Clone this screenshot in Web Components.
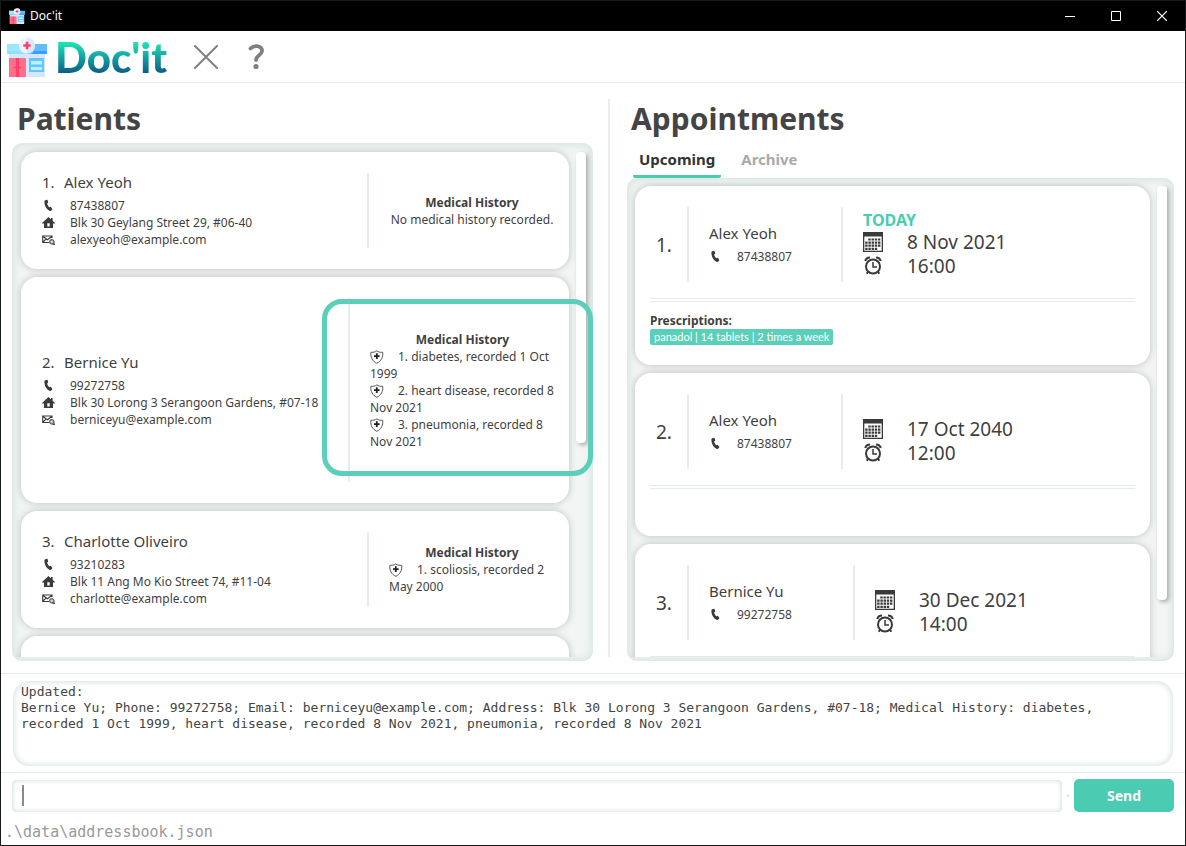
<!DOCTYPE html>
<html lang="en">
<head>
<meta charset="utf-8">
<title>Doc'it</title>
<style>
html, body { margin: 0; height: 100%; }
body { font-family: "Noto Sans", "Open Sans", sans-serif; font-size: 12px; line-height: 17px; color: #3f3f3f; background: #fff;
  --teal: #4acbb2; --line: #e4ecea; --ink: #3a3a3a; --edge: #d6e4e0; }
</style>
</head>
<body>
<docit-window>
  <title-bar slot="title"></title-bar>
  <menu-strip slot="menu"></menu-strip>
  <list-pane slot="left" heading="Patients" thumb="291">
    <patient-card index="1" name="Alex Yeoh" phone="87438807" address="Blk 30 Geylang Street 29, #06-40" email="alexyeoh@example.com">No medical history recorded.</patient-card>
    <patient-card wide index="2" name="Bernice Yu" phone="99272758" address="Blk 30 Lorong 3 Serangoon Gardens, #07-18" email="berniceyu@example.com">
      <history-entry>1. diabetes, recorded 1 Oct 1999</history-entry>
      <history-entry>2. heart disease, recorded 8 Nov 2021</history-entry>
      <history-entry>3. pneumonia, recorded 8 Nov 2021</history-entry>
    </patient-card>
    <patient-card index="3" name="Charlotte Oliveiro" phone="93210283" address="Blk 11 Ang Mo Kio Street 74, #11-04" email="charlotte@example.com">
      <history-entry>1. scoliosis, recorded 2 May 2000</history-entry>
    </patient-card>
    <patient-card blank></patient-card>
    <highlight-ring slot="overlay"></highlight-ring>
  </list-pane>
  <list-pane slot="right" heading="Appointments" tabs thumb="414">
    <appointment-card index="1" name="Alex Yeoh" phone="87438807" date="8 Nov 2021" time="16:00" today>panadol | 14 tablets | 2 times a week</appointment-card>
    <appointment-card index="2" name="Alex Yeoh" phone="87438807" date="17 Oct 2040" time="12:00"></appointment-card>
    <appointment-card wide index="3" name="Bernice Yu" phone="99272758" date="30 Dec 2021" time="14:00"></appointment-card>
  </list-pane>
  <result-box slot="result"></result-box>
  <command-bar slot="command"></command-bar>
  <status-footer slot="footer">.\data\addressbook.json</status-footer>
</docit-window>

<script>
const icons = {
  phone: '<svg width="13" height="13" viewBox="0 0 13 13"><path fill="#3a3a3a" d="M3.2 1.2 5 .8c.3 0 .5.1.6.4l.6 2c.1.300 0 .500-.2.6l-.9.7c.3 1.400 1.100 2.800 2.200 3.800l1-.4c.3-.1.5 0 .7.2l1.200 1.700c.2.3.1.500 0 .7l-1.200 1.300c-.3.300-.7.4-1.100.2C4.600 10.500 2.300 6.800 2.400 2.300c0-.5.300-1 .8-1.100z"/></svg>',
  home: '<svg width="13" height="13" viewBox="0 0 13 13"><path fill="#3a3a3a" fill-rule="evenodd" d="M6.500 1 9 3.300V2h1.600v2.800L13 7v.6h-2V12H2V7.600H0V7zM5.300 7.200v3.300h2.400V7.200z"/></svg>',
  mail: '<svg width="13" height="13" viewBox="0 0 13 13" fill="none" stroke="#3a3a3a"><path d="M7 9.500H.7v-6.500h9.300v2M1 3.500l4.400 3.300L9.800 3.500M1 9l3-2.800" stroke-width="1.100"/><circle cx="9.800" cy="8.800" r="2.300" fill="#999" stroke="#555"/><path d="M8.800 8.800h2M9.800 7.800v2" stroke="#fff" stroke-width=".7"/><path d="M10.500 11.400H13V9.500"/></svg>',
  shield: '<svg width="14" height="14" viewBox="0 0 14 14" fill="none"><path stroke="#555" d="M6.800.9C5 2.200 2.900 2.400.9 2.300c-.6 5 1.600 9 5.900 11 4.300-2 6.500-6 5.900-11-2 .1-4.100-.1-5.900-1.400z"/><path stroke="#222" stroke-width="1.800" d="M6.800 3.300v5.600M4 6.100h5.600"/></svg>',
  calendar: '<svg width="20" height="20" viewBox="0 0 20 20"><path fill="#3a3a3a" fill-rule="evenodd" d="M0 0h20v20H0zM1.300 4.500v14.200h17.400V4.500z"/><path stroke="#3a3a3a" stroke-width="2.200" stroke-dasharray="2.400 .8" d="M5.300 7.500H18M2.200 10.600H18M2.200 13.700H18M2.200 16.800h12.300" fill="none"/></svg>',
  clock: '<svg width="20" height="20" viewBox="0 0 20 20" fill="none" stroke="#3a3a3a"><circle cx="10" cy="10.500" r="7" stroke-width="2"/><path stroke-width="1.500" d="M10 6v5h4"/><path stroke-width="2.200" d="M2.300 5c.5-2 2.300-3.500 4.700-3.500M17.700 5C17.200 3 15.400 1.500 13 1.500"/><path stroke-width="2" d="m5.200 15.500-1.500 2.300M14.800 15.500l1.500 2.300"/></svg>',
  clinic: size => `<svg width="${size}" height="${size}" viewBox="0 0 40 40"><path fill="#d6e6fd" d="M2 16h36v24H2z"/><path fill="#ff6f87" d="M2 21h17v19H2z"/><path fill="#ff3f6c" d="M9 21h3v19H9z"/><path stroke="#ff3f6c" stroke-width="1.500" d="M6.800 30.500h7.400"/><path fill="#5fc6ff" d="M22 21h15v14H22z"/><path fill="#bdf1ff" d="M24 24h11v3.500H24zM24 30h11v3H24z"/><path fill="#8fe2ff" d="M0 7h20v10H0z"/><path fill="#62bdff" d="M20 7h20v10H20z"/><path fill="#98e9ff" d="M0 7h14v7H0z"/><path fill="#3d9dfb" d="M27 14h13v3H25z"/><circle cx="20" cy="8.500" r="8" fill="#eef4ff"/><path fill="#dbe7fb" d="M20 .5a8 8 0 0 1 0 16z"/><path stroke="#f5436d" stroke-width="2.600" d="M20 4.800v7.400M16.300 8.500h7.400"/></svg>`
};

function define(name, render) {
  customElements.define(name, class extends HTMLElement {
    connectedCallback() {
      if (this.shadowRoot) return;
      this.attachShadow({ mode: 'open' }).innerHTML = render(this);
    }
  });
}
const at = (el, name) => el.getAttribute(name) || '';

define('docit-window', () => `
<style>
:host { display: flex; flex-direction: column; box-sizing: border-box; height: 100vh; border: 1px solid #17191b; }
main { flex: 1; display: flex; padding: 16px 11px 12px; min-height: 0; box-sizing: border-box; }
.left { flex: 581; min-width: 0; display: flex; }
.right { flex: 547; min-width: 0; display: flex; }
.divider { width: 2px; margin: 0 17px 4px 15px; background: #e6edeb; }
::slotted(*) { flex: none; }
::slotted(list-pane) { flex: 1; min-width: 0; }
</style>
<slot name="title"></slot>
<slot name="menu"></slot>
<main>
  <div class="left"><slot name="left"></slot></div>
  <div class="divider"></div>
  <div class="right"><slot name="right"></slot></div>
</main>
<slot name="result"></slot>
<slot name="command"></slot>
<slot name="footer"></slot>`);

define('title-bar', () => `
<style>
:host { display: flex; align-items: center; height: 30px; background: #000; color: #fff; padding-left: 8px; }
span { flex: 1; margin: 0 0 2px 5px; font-size: 12px; }
button { width: 46px; height: 30px; padding: 0; border: 0; background: none; display: grid; place-items: center; }
</style>
${icons.clinic(16)}
<span>Doc'it</span>
<button aria-label="Minimize"><svg width="10" height="10"><path stroke="#fff" d="M0 5.500h10"/></svg></button>
<button aria-label="Maximize"><svg width="10" height="10"><path fill="none" stroke="#fff" d="M.5.500h9v9h-9z"/></svg></button>
<button aria-label="Close"><svg width="10" height="10"><path stroke="#fff" stroke-width="1.200" d="m0 0 10 10M10 0 0 10"/></svg></button>`);

define('menu-strip', () => `
<style>
:host { display: flex; align-items: center; height: 51px; border-bottom: 1px solid var(--line); padding-left: 6px; }
h1 { margin: 0 0 0 8px; width: 117px; font: 900 42px/50px Lato, "Noto Sans", sans-serif; background: linear-gradient(#1fe0b0 24%, #14a2a5 50%, #0b5a80 84%); -webkit-background-clip: text; background-clip: text; color: transparent; }
button { width: 50px; height: 40px; padding: 0; border: 0; background: none; display: grid; place-items: center; }
.exit { margin-left: 9px; }
</style>
${icons.clinic(40)}
<h1>Doc'it</h1>
<button class="exit" aria-label="Exit"><svg width="24" height="24" viewBox="0 0 24 24"><path stroke="#808080" stroke-width="2" stroke-linecap="round" d="m1 1 22 22M23 1 1 23"/></svg></button>
<button aria-label="Help"><svg width="18" height="26" viewBox="0 0 18 26"><path fill="none" stroke="#808080" stroke-width="3.800" stroke-linecap="round" d="M3.500 4.500C5.500 2.500 8 2 10 2.200c3.500.3 5.300 2.500 5 5-.3 3.800-6 4.800-6 8.800"/><circle cx="9" cy="22.500" r="2.600" fill="#808080"/></svg></button>`);

define('list-pane', el => `
<style>
:host { display: flex; flex-direction: column; }
h2 { margin: 0 0 4px; padding-left: 5px; font-size: 30px; line-height: 40px; font-weight: 700; color: #444; }
:host([tabs]) h2 { margin: 0; padding-left: 4px; }
.tabs { display: flex; height: 39px; padding-left: 6px; gap: 14px; }
.tabs button { font: 700 15px/24px "Noto Sans", sans-serif; color: #a9a9a9; background: none; border: 0; border-bottom: 3px solid transparent; border-radius: 2px; padding: 8px 6px 4px; box-sizing: border-box; }
.tabs button[aria-selected=true] { color: #333; border-color: var(--teal); }
.panel { position: relative; flex: 1; min-height: 0; display: flex; box-sizing: border-box; padding: 4px 7px 4px 4px; border-radius: 10px; background: #f3f5f5; box-shadow: inset 0 0 8px 2px var(--edge); }
.view { flex: 1; min-width: 0; overflow: hidden; display: flex; flex-direction: column; gap: 8px; padding: 5px 7px 0 5px; }
.thumb { width: 10px; height: ${at(el, 'thumb')}px; margin-top: 5px; border-radius: 4px; background: #fff; box-shadow: 2px 2px 4px rgba(0,0,0,.3); }
:host([tabs]) .view { padding: 4px 7px 0 4px; }
:host([tabs]) .thumb { margin-top: 4px; }
.view ::slotted(*) { flex: none; }
</style>
<h2>${at(el, 'heading')}</h2>
${el.hasAttribute('tabs') ? '<div class="tabs" role="tablist"><button role="tab" aria-selected="true">Upcoming</button><button role="tab" aria-selected="false">Archive</button></div>' : ''}
<div class="panel">
  <div class="view"><slot></slot></div>
  <div class="thumb"></div>
  <slot name="overlay"></slot>
</div>`);

define('contact-line', el => `
<style>
:host { display: flex; align-items: center; height: 17px; white-space: nowrap; }
svg { flex: none; margin-right: 15px; }
</style>
${icons[at(el, 'icon')]}<span><slot></slot></span>`);

define('history-entry', () => `
<style>
:host { display: block; text-align: left; }
svg { vertical-align: -3px; margin-right: 14px; }
</style>${icons.shield}<slot></slot>`);

const cardBox = 'border-radius: 16px; background: #fff; box-shadow: 0 0 7px rgba(40,55,50,.28); box-sizing: border-box;';

define('patient-card', el => `
<style>
:host { display: flex; ${cardBox} padding: 21px 14px 21px 21px; min-height: 117px; }
:host([wide]) { min-height: 226px; }
.who { flex: 1; min-width: 0; display: flex; flex-direction: column; justify-content: center; }
.name { display: flex; font-size: 15px; line-height: 18px; margin-bottom: 6px; }
.name b { font-weight: 400; width: 22px; }
.history { width: 166px; padding-left: 20px; border-left: 2px solid #e6edeb; display: flex; flex-direction: column; justify-content: center; text-align: center; }
:host([wide]) .history { width: 185px; }
</style>
${el.hasAttribute('blank') ? '' : `
<div class="who">
  <div class="name"><b>${at(el, 'index')}.</b><span>${at(el, 'name')}</span></div>
  <contact-line icon="phone">${at(el, 'phone')}</contact-line>
  <contact-line icon="home">${at(el, 'address')}</contact-line>
  <contact-line icon="mail">${at(el, 'email')}</contact-line>
</div>
<div class="history"><strong>Medical History</strong><div><slot></slot></div></div>`}`);

define('appointment-card', el => `
<style>
:host { display: block; ${cardBox} padding: 21px 15px 20px; }
.row { display: flex; height: 75px; align-items: stretch; }
.row > div { display: flex; flex-direction: column; justify-content: center; }
.row > .index { width: 31px; padding: 2px 0 0 6px; font-size: 19px; }
.who { width: 112px; padding: 0 20px; border: solid #e6edeb; border-width: 0 2px; }
:host([wide]) .who { width: 124px; }
.name { font-size: 15px; line-height: 18px; margin-bottom: 6px; }
.when { padding-left: 20px; }
.today { height: 18px; line-height: 16px; font-size: 16px; font-weight: 700; color: var(--teal); }
.slot { display: flex; align-items: center; gap: 24px; font-size: 19px; height: 24px; line-height: 24px; }
.rule { height: 2px; margin: 16px 0 10px; border: solid var(--line); border-width: 1px 0; }
.label { height: 17px; font-weight: 700; }
.tag { display: block; width: max-content; height: 16px; line-height: 16px; padding: 0 4px; border-radius: 2px; background: #5bcfb9; color: #fff; font-family: Lato, sans-serif; font-size: 11px; }
</style>
<div class="row">
  <div class="index">${at(el, 'index')}.</div>
  <div class="who"><span class="name">${at(el, 'name')}</span><contact-line icon="phone">${at(el, 'phone')}</contact-line></div>
  <div class="when">
    <div class="today">${el.hasAttribute('today') ? 'TODAY' : ''}</div>
    <div class="slot">${icons.calendar}<span>${at(el, 'date')}</span></div>
    <div class="slot">${icons.clock}<span>${at(el, 'time')}</span></div>
  </div>
</div>
<div class="rule"></div>
<div class="label">${el.textContent ? 'Prescriptions:' : ''}</div>
${el.textContent ? '<span class="tag"><slot></slot></span>' : ''}`);

define('highlight-ring', () => `
<style>
:host { position: absolute; right: 0; top: 156px; width: 271px; height: 177px; box-sizing: border-box; border: 5px solid #5bcfb9; border-radius: 20px; pointer-events: none; }
</style>`);

define('result-box', () => `
<style>
:host { display: block; border-top: 1px solid var(--line); border-bottom: 1px solid var(--line); padding: 7px 12px 6px; }
textarea { display: block; box-sizing: border-box; width: 100%; height: 85px; margin: 0; padding: 3px 48px 3px 8px; border: 0; outline: 0; resize: none; overflow: hidden; border-radius: 16px; background: #fff; box-shadow: inset 0 0 6px 1px #d3e2de; color: #444; font: 13px/16px "DejaVu Sans Mono", monospace; }
</style>
<textarea readonly aria-label="Result">Updated:
Bernice Yu; Phone: 99272758; Email: berniceyu@example.com; Address: Blk 30 Lorong 3 Serangoon Gardens, #07-18; Medical History: diabetes, recorded 1 Oct 1999, heart disease, recorded 8 Nov 2021, pneumonia, recorded 8 Nov 2021</textarea>`);

define('command-bar', () => `
<style>
:host { display: flex; align-items: center; height: 33px; padding: 6px 11px 7px; }
.field { position: relative; flex: 1; display: flex; }
input { flex: 1; min-width: 0; height: 32px; box-sizing: border-box; padding: 0 10px; border: 0; outline: 0; border-radius: 4px; background: #fff; box-shadow: inset 0 0 4px 1px #d3e2de; font: 15px "DejaVu Sans Mono", monospace; }
.caret { position: absolute; left: 10px; top: 5px; width: 2px; height: 21px; background: #8a8a8a; }
.dot { width: 2px; height: 3px; margin: 0 5px; background: #e3e9e7; }
button { width: 100px; height: 33px; padding: 0; border: 0; border-radius: 5px; background: var(--teal); color: #fff; font: 700 14px "Noto Sans", sans-serif; }
</style>
<div class="field"><input type="text" aria-label="Command"><span class="caret"></span></div>
<span class="dot"></span>
<button>Send</button>`);

define('status-footer', () => `
<style>
:host { display: block; height: 26px; padding-left: 4px; font: 15px/26px "DejaVu Sans Mono", monospace; color: #999; }
</style><slot></slot>`);
</script>
</body>
</html>
